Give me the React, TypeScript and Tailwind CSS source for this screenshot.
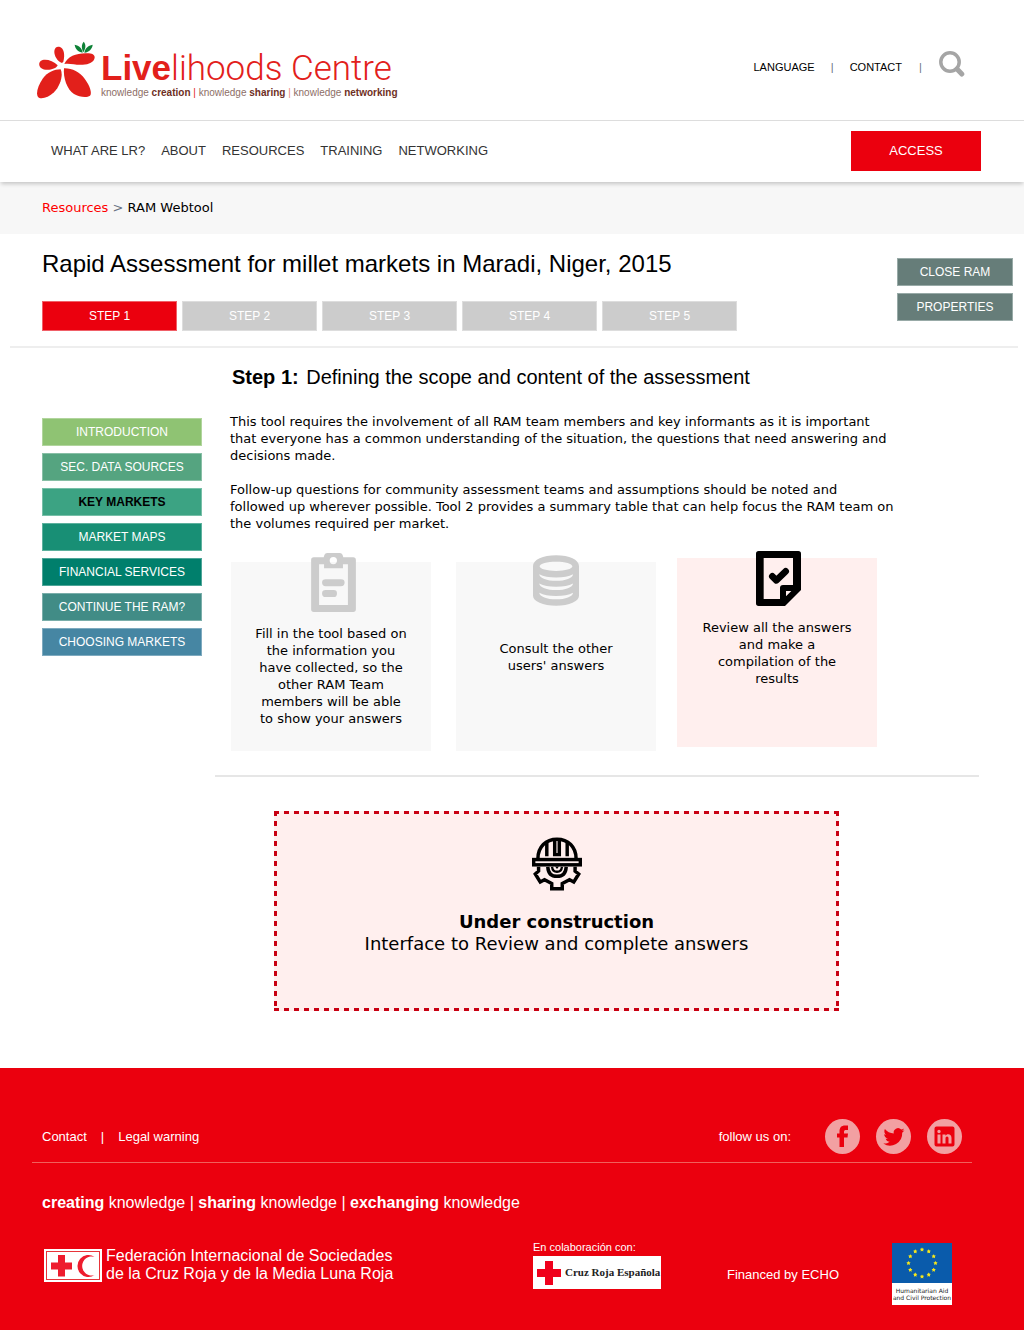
import React from "react";

const sans = "font-['Liberation_Sans',Arial,sans-serif]";

const navLinks = ["WHAT ARE LR?", "ABOUT", "RESOURCES", "TRAINING", "NETWORKING"];

const steps = [
  { label: "STEP 1", style: "bg-[#eb000e] border-[#f06068]" },
  { label: "STEP 2", style: "bg-[#cccccc] border-[#dddddd]" },
  { label: "STEP 3", style: "bg-[#cccccc] border-[#dddddd]" },
  { label: "STEP 4", style: "bg-[#cccccc] border-[#dddddd]" },
  { label: "STEP 5", style: "bg-[#cccccc] border-[#dddddd]" },
];

const sections = [
  { label: "INTRODUCTION", style: "bg-[#8fc373] border-[#b1d59d] text-white" },
  { label: "SEC. DATA SOURCES", style: "bg-[#55a480] border-[#88bfa6] text-white" },
  { label: "KEY MARKETS", style: "bg-[#3ca383] border-[#77bfa8] text-black font-bold" },
  { label: "MARKET MAPS", style: "bg-[#188f75] border-[#5db19e] text-white" },
  { label: "FINANCIAL SERVICES", style: "bg-[#007f6c] border-[#4da598] text-white" },
  { label: "CONTINUE THE RAM?", style: "bg-[#418c86] border-[#7aaeaa] text-white" },
  { label: "CHOOSING MARKETS", style: "bg-[#4686a3] border-[#7eaabf] text-white" },
];

function Flower() {
  return (
    <svg viewBox="22 18 174 174" className="h-[58px] w-[58px] shrink-0" aria-hidden="true">
      <g fill="#e2201b">
        <path d="M97 84C84 80 73 63 74 48C75 37 83 33 91 36C102 40 107 58 101 80Z" />
        <path d="M84 91C78 105 46 109 34 99C27 93 27 83 33 78C44 70 70 76 84 91Z" />
        <path d="M104 87C114 64 141 54 172 55C187 55 196 59 195 68C193 81 178 88 159 89C140 91 121 84 104 87Z" />
        <path d="M93 103C101 120 93 151 73 172C56 189 32 194 25 186C18 176 24 153 39 131C54 111 74 103 93 103Z" />
        <path d="M103 100C126 99 150 111 165 131C181 152 188 175 181 182C171 189 149 186 133 177C112 164 100 128 103 100Z" />
      </g>
      <g fill="#0d8136">
        <path d="M161 52C154 38 156 27 162 20C169 28 169 39 161 52Z" />
        <path d="M159 53C145 51 136 40 135 29C149 32 157 40 159 53Z" />
        <path d="M164 53C166 40 175 32 189 29C188 41 179 51 164 53Z" />
      </g>
    </svg>
  );
}

function Logo() {
  return (
    <a href="#" className={`flex items-center gap-1.5 ${sans}`} aria-label="Livelihoods Centre">
      <Flower />
      <span className="block whitespace-nowrap pt-2">
        <span className="block text-[35px] leading-[37px] text-[#e2201b]">
          <b>Live</b>
          <span className="font-['Roboto','Liberation_Sans',sans-serif] font-light">lihoods Centre</span>
        </span>
        <span className="block text-[10px] leading-3 text-[#8d6e66]">
          knowledge <b className="text-[#6e2f24]">creation</b> <span className="text-[#e2201b]">|</span> knowledge{" "}
          <b className="text-[#6e2f24]">sharing</b> <span className="text-[#ee8880]">|</span> knowledge{" "}
          <b className="text-[#6e2f24]">networking</b>
        </span>
      </span>
    </a>
  );
}

function ClipboardIcon() {
  return (
    <svg viewBox="273 38 135 178" className="h-[59px] w-[45px]" aria-hidden="true">
      <path
        fill="#cccccc"
        fillRule="evenodd"
        d="M281 51H311Q313 38 322 38H359Q368 38 370 51H400Q408 51 408 59V208Q408 216 400 216H281Q273 216 273 208V59Q273 51 281 51ZM297 72V195H384V72H369V84H312V72ZM340 50A11 11 0 1 0 340 72A11 11 0 1 0 340 50ZM317 117H363Q374 117 374 127Q374 138 363 138H317Q306 138 306 127Q306 117 317 117ZM317 150H341Q351 150 351 160Q351 171 341 171H317Q306 171 306 160Q306 150 317 150Z"
      />
    </svg>
  );
}

function DatabaseIcon() {
  return (
    <svg viewBox="938 44 139 152" className="h-[51px] w-[46px]" aria-hidden="true">
      <path
        fill="#cccccc"
        fillRule="evenodd"
        d="M938 76C938 58 968 44 1008 44C1048 44 1077 58 1077 76V166C1077 183 1048 196 1008 196C968 196 938 183 938 166ZM1008 63C981 63 958 69 958 77C958 85 981 91 1008 91C1035 91 1057 85 1057 77C1057 69 1035 63 1008 63ZM957 101C958 113 980 121 1008 121C1036 121 1058 113 1059 101C1046 108 1030 111 1008 111C986 111 970 108 957 101ZM957 129C958 141 980 149 1008 149C1036 149 1058 141 1059 129C1046 136 1030 139 1008 139C986 139 970 136 957 129ZM957 157C958 169 980 177 1008 177C1036 177 1058 169 1059 157C1046 164 1030 167 1008 167C986 167 970 164 957 157Z"
      />
    </svg>
  );
}

function ReviewIcon() {
  return (
    <svg viewBox="588 33 135 165" className="h-[55px] w-[45px]" aria-hidden="true">
      <path
        fillRule="evenodd"
        d="M596 33H715Q723 33 723 41V150L675 198H596Q588 198 588 190V41Q588 33 596 33ZM611 54V177H660V144Q660 135 669 135H699V54ZM678 153V169L694 153Z"
      />
      <path d="M637 109L649 121L677 94" fill="none" stroke="#000" strokeWidth="20" strokeLinecap="round" strokeLinejoin="round" />
    </svg>
  );
}

function HelmetIcon() {
  return (
    <svg viewBox="62 110 152 163" className="h-[54px] w-[50px]" aria-hidden="true">
      <g fill="none" stroke="#000" strokeWidth="10.500">
        <path d="M80 175C80 140 104 116 138 116C172 116 196 140 196 175" />
        <path d="M107 128V168M169 128V168M131 116V163H145V116" />
        <rect x="67" y="178" width="142" height="16" />
        <path d="M110 200C111 219 121 229 138 229C155 229 165 219 166 200" />
        <path d="M123 200C124 210 129 215 138 215C147 215 152 210 153 200" strokeWidth="7" />
        <path d="M82 200V213L72 222L87 246L100 239L122 251V267H154V251L176 239L189 246L204 222L193 213V200" />
      </g>
      <path d="M132 199H144L138 207Z" />
    </svg>
  );
}

function EuropeFlag() {
  const stars = Array.from({ length: 12 }, (_, i) => {
    const a = (i * Math.PI) / 6;
    return { x: 30 + 13.5 * Math.sin(a), y: 20 - 13.5 * Math.cos(a) };
  });
  return (
    <svg viewBox="0 0 60 40" className="block h-10 w-[60px]" aria-hidden="true">
      <rect width="60" height="40" fill="#0a5bab" />
      {stars.map((s, i) => (
        <path
          key={i}
          transform={`translate(${s.x} ${s.y}) scale(1.05)`}
          fill="#f6e71c"
          d="M0-2L.8-.8 2-.6 1.100.4 1.300 1.900 0 1.300-1.300 1.900-1.100.4-2-.6-.8-.8Z"
        />
      ))}
    </svg>
  );
}

const social = [
  {
    name: "Facebook",
    shape: <path d="M12 14.500h2.500V12.500c0-4 2-6 5.500-6h3v4.500h-2c-1.300 0-2 .6-2 1.800v1.700h4l-.5 4H19V28h-4.500v-9.500H12Z" />,
  },
  {
    name: "Twitter",
    shape: (
      <path d="M28.500 11.200c-.8.4-1.600.6-2.500.7.9-.5 1.600-1.400 1.900-2.400-.8.5-1.800.9-2.700 1.100a4.300 4.300 0 0 0-7.400 3.900c-3.600-.2-6.800-1.900-8.900-4.500-1.100 2-.6 4.500 1.300 5.800-.7 0-1.400-.2-2-.5 0 2.100 1.500 3.900 3.500 4.300-.6.2-1.300.2-2 .1.600 1.700 2.100 3 4 3-1.800 1.400-4 2-6.400 1.800a12.200 12.200 0 0 0 18.900-10.800c.9-.7 1.700-1.500 2.300-2.500Z" />
    ),
  },
  {
    name: "LinkedIn",
    shape: (
      <path
        fillRule="evenodd"
        d="M9.500 7.500h16q2 0 2 2v16q0 2-2 2h-16q-2 0-2-2v-16q0-2 2-2ZM10.500 15.500v9h3v-9ZM12 10.800a1.700 1.700 0 1 0 0 3.400 1.700 1.700 0 1 0 0-3.400ZM15.500 15.500v9h3v-5c0-1.300.5-2 1.500-2s1.500.7 1.500 2v5h3v-5.500c0-2.500-1.200-3.800-3.300-3.800-1.300 0-2.200.6-2.700 1.500v-1.200Z"
      />
    ),
  },
];

export default function App() {
  return (
    <div className="min-h-screen bg-white font-['DejaVu_Sans',sans-serif] text-[13px] leading-[17px] text-black">
      <header className={sans}>
        <div className="flex h-[120px] items-center justify-between pt-5 pr-[59px] pl-[37px]">
          <Logo />
          <div className="mb-1.5 flex items-center text-[11px]">
            <a href="#">LANGUAGE</a>
            <span className="w-[35px] text-center text-gray-500">|</span>
            <a href="#">CONTACT</a>
            <span className="w-[37px] text-center text-gray-500">|</span>
            <button type="button" aria-label="Search">
              <svg viewBox="0 0 26 26" className="mb-1.5 block size-[26px]" fill="none" stroke="#a5a5a5" aria-hidden="true">
                <circle cx="11" cy="11" r="9.200" strokeWidth="3.500" />
                <path d="M18 18L22.800 23" strokeWidth="5" strokeLinecap="round" />
              </svg>
            </button>
          </div>
        </div>
        <nav className="relative flex h-[62px] items-center justify-between border-t border-[#dddddd] bg-white pr-[43px] pb-0.5 pl-[51px] shadow-[0_3px_4px_-1px_rgba(0,0,0,0.2)]">
          <ul className="flex gap-4 text-[13px] text-[#333333]">
            {navLinks.map((l) => (
              <li key={l}>
                <a href="#">{l}</a>
              </li>
            ))}
          </ul>
          <button type="button" className="h-10 w-[130px] bg-[#eb000e] text-[13px] text-white">
            ACCESS
          </button>
        </nav>
      </header>

      <div className="h-[52px] bg-[#f7f7f7] pt-[17px] pl-[42px]">
        <a href="#" className="text-[#ff0000]">
          Resources
        </a>{" "}
        <span className="text-gray-500">&gt;</span> <span>RAM Webtool</span>
      </div>

      <main>
        <div className={`mr-1.5 ml-2.5 flex justify-between border-b-2 border-[#eeeeee] pr-[5px] pb-[15px] pl-8 ${sans}`}>
          <div>
            <h1 className="pt-4 text-[24px] leading-7">Rapid Assessment for millet markets in Maradi, Niger, 2015</h1>
            <div className="mt-[23px] flex gap-[5px]">
              {steps.map((s) => (
                <button key={s.label} type="button" className={`h-[30px] w-[135px] border text-[12px] text-white ${s.style}`}>
                  {s.label}
                </button>
              ))}
            </div>
          </div>
          <div className="flex flex-col gap-[7px] pt-6">
            {["CLOSE RAM", "PROPERTIES"].map((l) => (
              <button key={l} type="button" className="h-7 w-[116px] border border-[#98aaa7] bg-[#667d79] text-[12px] text-white">
                {l}
              </button>
            ))}
          </div>
        </div>

        <div className="flex pr-[45px] pl-[42px]">
          <nav className={`flex w-40 shrink-0 flex-col gap-[7px] pt-[70px] ${sans}`}>
            {sections.map((s) => (
              <button key={s.label} type="button" className={`h-7 border text-[12px] ${s.style}`}>
                {s.label}
              </button>
            ))}
          </nav>

          <div className="ml-[13px] flex-1">
            <div className="border-b-2 border-[#e6e6e6] pb-[24px] pl-[15px]">
              <h2 className={`pt-[15px] pl-0.5 text-[20px] leading-7 ${sans}`}>
                <b className="mr-0.5">Step 1:</b> Defining the scope and content of the assessment
              </h2>
              <p className="mt-[22px] max-w-[665px]">
                This tool requires the involvement of all RAM team members and key informants as it is important that
                everyone has a common understanding of the situation, the questions that need answering and decisions
                made.
              </p>
              <p className="mt-[17px] max-w-[665px]">
                Follow-up questions for community assessment teams and assumptions should be noted and followed up
                wherever possible. Tool 2 provides a summary table that can help focus the RAM team on the volumes
                required per market.
              </p>
              <div className="mt-[26px] flex pl-px">
                <article className="relative mt-1 h-[189px] w-[200px] bg-[#f8f8f8] px-6 pt-[63px] text-center">
                  <div className="absolute -top-[9px] left-20">
                    <ClipboardIcon />
                  </div>
                  Fill in the tool based on the information you have collected, so the other RAM Team members will be
                  able to show your answers
                </article>
                <article className="relative mt-1 ml-[25px] h-[189px] w-[200px] bg-[#f8f8f8] px-6 pt-[78px] text-center">
                  <div className="absolute -top-[7px] left-[77px]">
                    <DatabaseIcon />
                  </div>
                  Consult the other users&#39; answers
                </article>
                <article className="relative ml-[21px] h-[189px] w-[200px] bg-[#ffefee] px-6 pt-[61px] text-center">
                  <div className="absolute -top-[7px] left-[79px]">
                    <ReviewIcon />
                  </div>
                  Review all the answers and make a compilation of the results
                </article>
              </div>
            </div>

            <section className="mt-[34px] ml-[59px] flex h-[200px] max-w-[565px] flex-col items-center bg-[#ffefee] bg-[repeating-linear-gradient(90deg,#c80012_0_5px,transparent_5px_10px),repeating-linear-gradient(90deg,#c80012_0_5px,transparent_5px_10px),repeating-linear-gradient(#c80012_0_5px,transparent_5px_10px),repeating-linear-gradient(#c80012_0_5px,transparent_5px_10px)] bg-[position:top,bottom,left,right] bg-[size:100%_3px,100%_3px,3px_100%,3px_100%] bg-no-repeat pt-[26px] text-center text-[18px] leading-[22px]">
              <HelmetIcon />
              <h3 className="mt-5 font-bold">Under construction</h3>
              <p>Interface to Review and complete answers</p>
            </section>
          </div>
        </div>
      </main>

      <footer className={`mt-[57px] bg-[#eb000e] pt-[51px] pb-[26px] text-white ${sans}`}>
        <div className="mr-[52px] ml-8 flex items-center justify-between border-b border-[#f0605c] pr-2.5 pb-2 pl-2.5">
          <div>
            <a href="#">Contact</a>
            <span className="mx-3.5">|</span>
            <a href="#">Legal warning</a>
          </div>
          <div className="flex items-center gap-4">
            <span className="mr-[18px]">follow us on:</span>
            {social.map((s) => (
              <a key={s.name} href="#" aria-label={s.name} className="size-[35px] rounded-full bg-[#f2a0a2]">
                <svg viewBox="0 0 35 35" className="size-[35px]" fill="#eb000e" aria-hidden="true">
                  {s.shape}
                </svg>
              </a>
            ))}
          </div>
        </div>
        <p className="mt-[30px] pl-[42px] text-[16px] leading-5">
          <b>creating</b> knowledge | <b>sharing</b> knowledge | <b>exchanging</b> knowledge
        </p>
        <div className="mt-[30px] grid grid-cols-[489fr_194fr_165fr_60px] items-start pr-[72px] pl-11">
          <div className="flex items-center gap-1 pt-1">
            <svg viewBox="0 0 58 33" className="h-[33px] w-[58px] shrink-0" role="img" aria-label="Red Cross and Red Crescent">
              <rect width="58" height="33" fill="#fff" />
              <rect x="2.500" y="2.500" width="53" height="28" fill="none" stroke="#e8343a" />
              <path fill="#ee1c2e" d="M14 6h7v7.500h7v7h-7v7h-7v-7H7v-7h7Z" />
              <path fill="#ee1c2e" d="M50.500 7.800A11 11 0 1 0 50.500 26.200A9.600 9.600 0 1 1 50.500 7.800Z" />
            </svg>
            <p className="text-[16px] leading-[18px] whitespace-nowrap">
              Federación Internacional de Sociedades
              <br />
              de la Cruz Roja y de la Media Luna Roja
            </p>
          </div>
          <div>
            <p className="-mt-0.5 pb-0.5 text-[11px] leading-[13px]">En colaboración con:</p>
            <div className="flex h-[33px] w-32 items-center gap-1 bg-white pl-1 whitespace-nowrap text-[#222222]">
              <svg viewBox="0 0 24 24" className="size-6 shrink-0" fill="#f0001c" aria-hidden="true">
                <path d="M8 0h8v8h8v8h-8v8H8v-8H0V8h8Z" />
              </svg>
              <b className="font-['Liberation_Serif',serif] text-[11px]">Cruz Roja Española</b>
            </div>
          </div>
          <p className="pt-[23px]">Financed by ECHO</p>
          <div className="bg-white">
            <EuropeFlag />
            <p className="overflow-hidden py-1 text-center font-['DejaVu_Sans',sans-serif] text-[6px] leading-[7px] whitespace-nowrap text-[#222222]">
              Humanitarian Aid
              <br />
              and Civil Protection
            </p>
          </div>
        </div>
      </footer>
    </div>
  );
}
